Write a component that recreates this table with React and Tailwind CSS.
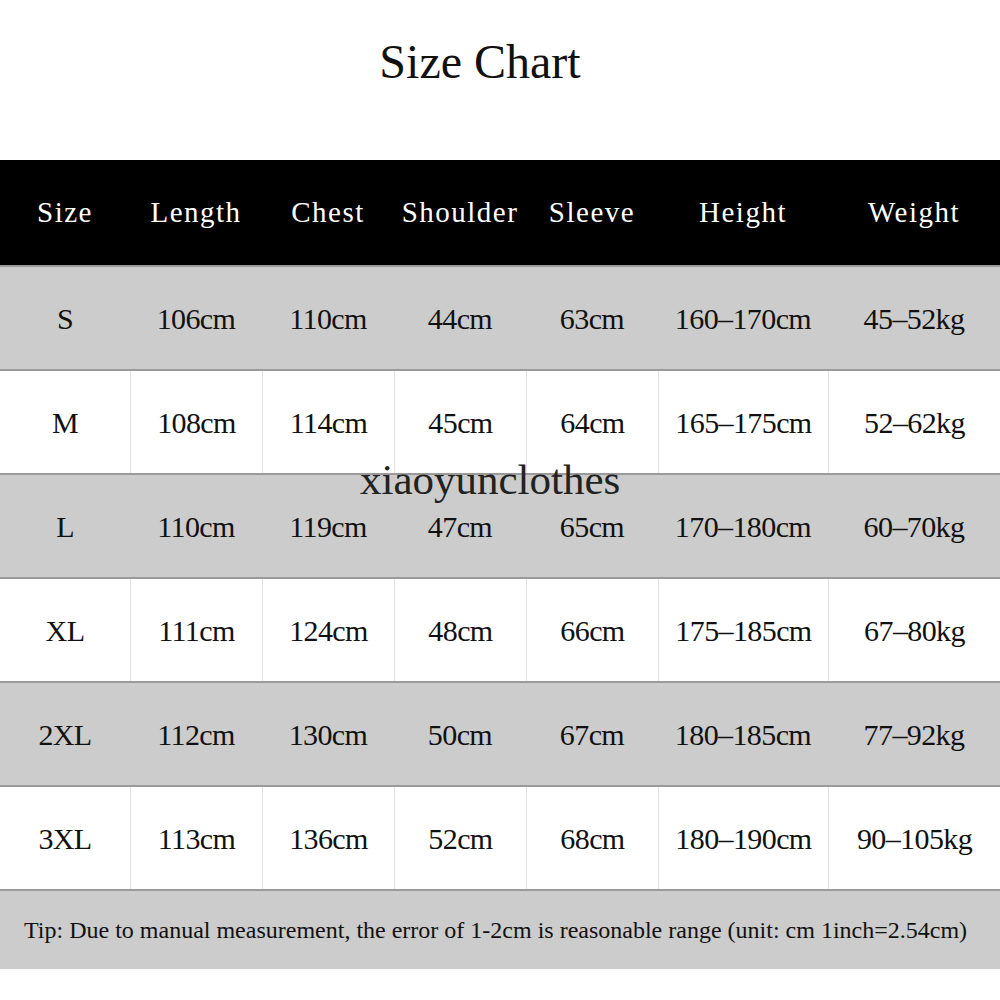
import React from "react";

const headers = ["Size", "Length", "Chest", "Shoulder", "Sleeve", "Height", "Weight"];

const rows = [
  ["S", "106cm", "110cm", "44cm", "63cm", "160-170cm", "45-52kg"],
  ["M", "108cm", "114cm", "45cm", "64cm", "165-175cm", "52-62kg"],
  ["L", "110cm", "119cm", "47cm", "65cm", "170-180cm", "60-70kg"],
  ["XL", "111cm", "124cm", "48cm", "66cm", "175-185cm", "67-80kg"],
  ["2XL", "112cm", "130cm", "50cm", "67cm", "180-185cm", "77-92kg"],
  ["3XL", "113cm", "136cm", "52cm", "68cm", "180-190cm", "90-105kg"],
];

const cols = "grid grid-cols-[130px_132px_132px_132px_132px_170px_172px]";

function Row({ cells, gray }) {
  return (
    <div
      className={`${cols} h-[104px] border-t-2 border-[#9a9a9a] ${
        gray ? "bg-[#cccccc]" : "bg-white"
      }`}
    >
      {cells.map((c, i) => (
        <div
          key={i}
          className={`flex items-center justify-center text-[30px] tracking-[-0.6px] text-[#111] ${
            !gray && i > 0 ? "border-l border-[#e4e4e4]" : ""
          }`}
        >
          {c.replace("-", "\u2013")}
        </div>
      ))}
    </div>
  );
}

export default function App() {
  return (
    <div
      className="relative w-[1000px] h-[1000px] bg-white overflow-hidden"
      style={{ fontFamily: '"Liberation Serif", "Times New Roman", serif' }}
    >
      <div className="h-[160px] pt-[38px] pr-[40px] text-center text-[48px] leading-none text-[#111]">
        Size Chart
      </div>

      <div className={`${cols} h-[105px] bg-black text-white`}>
        {headers.map((h) => (
          <div
            key={h}
            className="flex items-center justify-center text-[29px] tracking-[1.5px]"
          >
            {h}
          </div>
        ))}
      </div>

      {rows.map((r, i) => (
        <Row key={r[0]} cells={r} gray={i % 2 === 0} />
      ))}

      <div className="h-[80px] border-t-2 border-[#9a9a9a] bg-[#cccccc] flex items-center pl-[24px] text-[24px] text-[#111]">
        Tip: Due to manual measurement, the error of 1-2cm is reasonable range (unit: cm 1inch=2.54cm)
      </div>

      <div className="absolute left-[360px] top-[458px] text-[43px] leading-none text-[#222]">
        xiaoyunclothes
      </div>
    </div>
  );
}
